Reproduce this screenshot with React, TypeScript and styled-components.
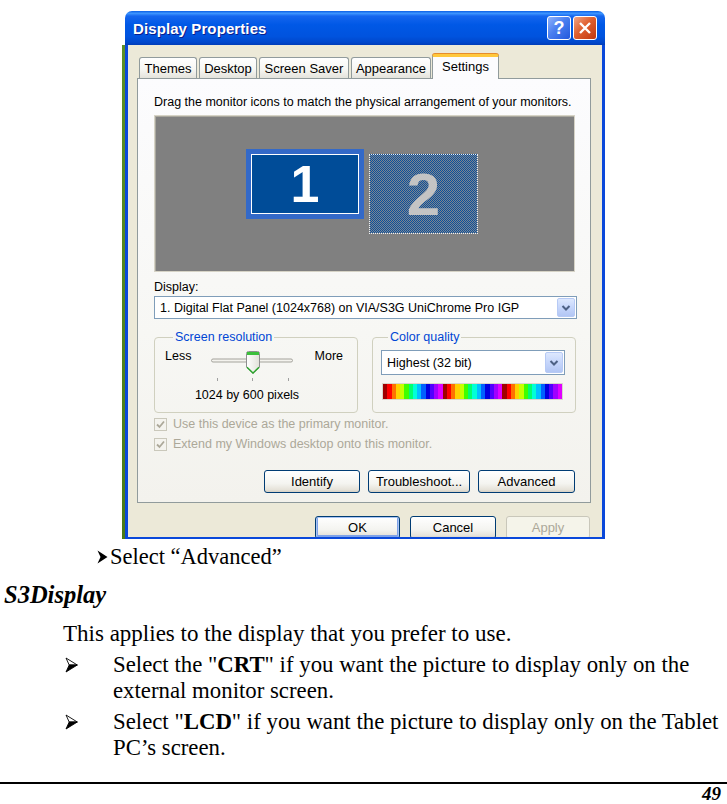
import React from "react";
import styled, { createGlobalStyle } from "styled-components";

const Global = createGlobalStyle`
  html, body { margin: 0; padding: 0; background: #fff; }
  body { width: 727px; min-height: 804px; }
`;

const Page = styled.div`
  display: flex;
  flex-direction: column;
  width: 727px;
  font-family: "Liberation Serif", "Times New Roman", serif;
  color: #000;
`;

/* ---------- screenshot of the dialog ---------- */

const Shot = styled.div`
  margin: 11px 0 0 122px;
  width: 483px;
  height: 528px;
  box-sizing: border-box;
  padding-left: 3px;
  display: flex;
  background: linear-gradient(to bottom, transparent 0 34px, #5c8f25 34px, #4a7a18 100%) left top / 3px 100% no-repeat;
`;

const Window = styled.div`
  flex: 1;
  display: flex;
  flex-direction: column;
  font-family: "Liberation Sans", Arial, sans-serif;
  font-size: 12.5px;
  color: #000;
`;

const TitleBar = styled.div`
  height: 34px;
  flex: none;
  display: flex;
  align-items: center;
  gap: 2px;
  padding: 0 8px 0 8px;
  border-radius: 7px 7px 0 0;
  background: linear-gradient(
    180deg,
    #0a5fe6 0%,
    #3d95ff 7%,
    #1566ee 15%,
    #0058e6 40%,
    #0053de 75%,
    #0047cc 92%,
    #003cb8 100%
  );
`;

const Title = styled.div`
  flex: 1;
  color: #fff;
  font-weight: bold;
  font-size: 15px;
  letter-spacing: 0.1px;
  text-shadow: 1px 1px 0 #0a1e8c;
`;

const CaptionBtn = styled.div<{ $kind: "help" | "close" }>`
  width: 24px;
  height: 24px;
  box-sizing: border-box;
  border: 1px solid #fff;
  border-radius: 3px;
  display: flex;
  align-items: center;
  justify-content: center;
  color: #fff;
  font-weight: bold;
  font-size: 18px;
  background: ${(p) =>
    p.$kind === "help"
      ? "linear-gradient(135deg, #8fb3fb 0%, #4a7ff0 45%, #2258dc 100%)"
      : "linear-gradient(135deg, #f0a587 0%, #e0602f 45%, #c0370f 100%)"};
`;

const Frame = styled.div`
  flex: 1;
  display: flex;
  flex-direction: column;
  background: #ece9d8;
  border: 3px solid #0a48da;
  border-top: 0;
  border-bottom-width: 2px;
  padding: 9px 11px 0 9px;
  overflow: hidden;
  min-height: 0;
`;

const TabRow = styled.div`
  display: flex;
  align-items: flex-end;
  gap: 2px;
  height: 25px;
  padding-left: 2px;
  margin-bottom: -1px;
  position: relative;
  z-index: 1;
  flex: none;
`;

const Tab = styled.div<{ $w: number; $active?: boolean }>`
  width: ${(p) => p.$w}px;
  box-sizing: border-box;
  height: ${(p) => (p.$active ? 25 : 21)}px;
  margin-bottom: ${(p) => (p.$active ? 0 : 1)}px;
  margin-left: ${(p) => (p.$active ? -1 : 0)}px;
  border: 1px solid #919b9c;
  border-bottom: none;
  border-top: ${(p) => (p.$active ? "3px solid #ffc83c" : "1px solid #919b9c")};
  border-radius: 3px 3px 0 0;
  display: flex;
  justify-content: center;
  align-items: ${(p) => (p.$active ? "flex-start" : "center")};
  padding-top: ${(p) => (p.$active ? 2 : 0)}px;
  font-size: 13px;
  background: ${(p) =>
    p.$active
      ? "#fcfcfe"
      : "linear-gradient(180deg, #ffffff 0%, #f7f7f3 55%, #e4e3dc 100%)"};
  box-shadow: ${(p) => (p.$active ? "0 -1px 0 #e68b2c" : "none")};
`;

const Panel = styled.div`
  flex: none;
  display: flex;
  flex-direction: column;
  border: 1px solid #919b9c;
  background: linear-gradient(180deg, #fcfcfe 0%, #f7f7f4 60%, #f3f2ed 100%);
  padding: 16px 13px 9px 16px;
`;

const Line = styled.div<{ $mt?: number; $color?: string }>`
  line-height: 14px;
  height: 14px;
  margin-top: ${(p) => p.$mt ?? 0}px;
  color: ${(p) => p.$color ?? "#000"};
  white-space: nowrap;
`;

const MonitorArea = styled.div`
  margin-top: 6px;
  margin-right: 2px;
  height: 157px;
  box-sizing: border-box;
  position: relative;
  background: #808080;
  border: 1px solid #d6d3c6;
  box-shadow: inset 1px 1px 0 #a9a79d;
`;

const Monitor = styled.div<{ $x: number; $y: number; $w: number; $h: number; $primary?: boolean }>`
  position: absolute;
  left: ${(p) => p.$x}px;
  top: ${(p) => p.$y}px;
  width: ${(p) => p.$w}px;
  height: ${(p) => p.$h}px;
  box-sizing: border-box;
  display: flex;
  align-items: center;
  justify-content: center;
  font-family: "Liberation Sans", Arial, sans-serif;
  font-weight: bold;
  ${(p) =>
    p.$primary
      ? `
    border: 5px solid #3369c8;
    box-shadow: inset 0 0 0 1px #ffffff;
    background: #004c98;
    color: #fff;
    font-size: 52px;
  `
      : `
    border: 1px dotted #f0f0f0;
    background: repeating-conic-gradient(#0b4f9c 0 25%, #7d8690 0 50%) 0 0 / 2px 2px;
    color: #c4c4c4;
    font-size: 60px;
  `}
`;

const Select = styled.div<{ $h: number }>`
  height: ${(p) => p.$h}px;
  box-sizing: border-box;
  border: 1px solid #7f9db9;
  background: #fff;
  display: flex;
  align-items: center;
  padding: 0 1px 0 5px;
`;

const SelectText = styled.div`
  flex: 1;
  white-space: nowrap;
  overflow: hidden;
`;

const SelectArrow = styled.div`
  width: 18px;
  height: calc(100% - 2px);
  box-sizing: border-box;
  border: 1px solid #b7caf5;
  border-radius: 2px;
  background: linear-gradient(180deg, #dde8fe 0%, #c6d6fb 50%, #b2c6f4 100%);
  display: flex;
  align-items: center;
  justify-content: center;
`;

const GroupRow = styled.div`
  margin-top: 11px;
  display: grid;
  grid-template-columns: 204px 204px;
  gap: 14px;
  height: 83px;
`;

const Group = styled.fieldset<{ $pl: number; $pr: number }>`
  margin: 0;
  min-width: 0;
  border: 1px solid #d0d0bf;
  border-radius: 4px;
  padding: 0 ${(p) => p.$pr}px 0 ${(p) => p.$pl}px;
  display: flex;
  flex-direction: column;
`;

const Legend = styled.legend<{ $ml: number }>`
  color: #0046d5;
  padding: 0 2px;
  margin-left: ${(p) => p.$ml}px;
  line-height: 14px;
  font-size: 12.5px;
`;

const SliderRow = styled.div`
  margin-top: 5px;
  display: grid;
  grid-template-columns: 46px 82px 1fr;
  align-items: start;
`;

const SliderLabel = styled.div<{ $right?: boolean }>`
  line-height: 14px;
  justify-self: ${(p) => (p.$right ? "end" : "start")};
`;

const SliderSvg = styled.svg`
  display: block;
  margin-top: 2px;
`;

const Caption = styled.div`
  margin-top: 6px;
  line-height: 14px;
  width: 164px;
  text-align: center;
`;

const ColorBar = styled.div<{ $bg: string }>`
  margin: 8px 2px 0 1px;
  height: 17px;
  box-sizing: border-box;
  border: 1px solid #d8d6cc;
  background: ${(p) => p.$bg};
`;

const CheckRow = styled.div<{ $mt?: number }>`
  height: 20px;
  margin-top: ${(p) => p.$mt ?? 0}px;
  display: flex;
  align-items: center;
  gap: 6px;
  color: #aca899;
`;

const CheckBox = styled.div`
  width: 13px;
  height: 13px;
  box-sizing: border-box;
  border: 1px solid #cac8bb;
  background: #f4f3ee;
  display: flex;
  align-items: center;
  justify-content: center;
`;

const ButtonRow = styled.div<{ $mt: number; $pr: number; $gap: number }>`
  margin-top: ${(p) => p.$mt}px;
  padding-right: ${(p) => p.$pr}px;
  display: flex;
  justify-content: flex-end;
  gap: ${(p) => p.$gap}px;
  flex: none;
`;

const XPButton = styled.div<{ $w: number; $disabled?: boolean; $default?: boolean }>`
  width: ${(p) => p.$w}px;
  height: 23px;
  flex: none;
  box-sizing: border-box;
  border: 1px solid ${(p) => (p.$disabled ? "#c9c7ba" : "#003c74")};
  border-radius: 3px;
  display: flex;
  align-items: center;
  justify-content: center;
  font-size: 13px;
  color: ${(p) => (p.$disabled ? "#aca899" : "#000")};
  background: ${(p) =>
    p.$disabled
      ? "#f5f4ea"
      : "linear-gradient(180deg, #ffffff 0%, #f4f4f0 60%, #e6e3da 88%, #d6d0c5 100%)"};
  box-shadow: ${(p) =>
    p.$default ? "inset 0 0 0 1px #a9c4f3, inset 0 -1px 0 2px #7ea2e8" : "none"};
`;

/* ---------- document text ---------- */

const AdvLine = styled.div`
  margin-top: 5px;
  display: grid;
  grid-template-columns: 13px 1fr;
  align-items: center;
  padding-left: 97px;
  font-size: 22.5px;
  line-height: 26px;
  height: 26px;
`;

const Marker = styled.svg`
  display: block;
`;

const Heading = styled.div`
  margin: 12px 0 0 4px;
  font-weight: bold;
  font-style: italic;
  font-size: 24.5px;
  line-height: 26px;
`;

const Para = styled.div`
  margin: 13px 0 0 63px;
  font-size: 23px;
  line-height: 26px;
`;

const BulletItem = styled.div`
  margin-top: 5px;
  display: grid;
  grid-template-columns: 48px 1fr;
  padding-left: 65px;
  font-size: 22.8px;
  line-height: 26px;
  white-space: nowrap;
`;

const MarkerCell = styled.div`
  height: 26px;
  display: flex;
  align-items: center;
`;

const Rule = styled.div`
  margin-top: 21px;
  height: 2px;
  background: #000;
`;

const PageNum = styled.div`
  margin-top: 2px;
  text-align: right;
  padding-right: 6px;
  font-weight: bold;
  font-style: italic;
  font-size: 19px;
  line-height: 15px;
  height: 15px;
`;

/* ---------- data ---------- */

const hueCycle = [
  "#a00000",
  "#ff0000",
  "#ff7000",
  "#ffd000",
  "#c8ff00",
  "#40ff00",
  "#00ff70",
  "#00ffd8",
  "#00c0ff",
  "#0060ff",
  "#0000e0",
  "#5000ff",
  "#a000ff",
  "#e000ff",
];

const colorBarBg = (() => {
  const colors = [...hueCycle, ...hueCycle, ...hueCycle];
  const step = 100 / colors.length;
  const stops = colors.map(
    (c, i) => `${c} ${(i * step).toFixed(2)}% ${((i + 1) * step).toFixed(2)}%`
  );
  return `linear-gradient(90deg, ${stops.join(", ")})`;
})();

const tabs = [
  { label: "Themes", w: 58 },
  { label: "Desktop", w: 58 },
  { label: "Screen Saver", w: 90 },
  { label: "Appearance", w: 80 },
  { label: "Settings", w: 67, active: true },
];

const Chevron = () => (
  <svg width="10" height="8" viewBox="0 0 10 8">
    <path d="M1.5 2 L5 5.5 L8.5 2" fill="none" stroke="#4d6185" strokeWidth="2" />
  </svg>
);

const Check = () => (
  <svg width="9" height="9" viewBox="0 0 9 9">
    <path d="M1 4.5 L3.5 7 L8 1.5" fill="none" stroke="#aca899" strokeWidth="1.8" />
  </svg>
);

const SolidArrow = () => (
  <Marker width="11" height="14" viewBox="0 0 11 14">
    <path d="M0.5 0.5 L10.5 7 L0.5 13.5 L3.5 7 Z" fill="#000" />
  </Marker>
);

const OutlineArrow = () => (
  <Marker width="13" height="16" viewBox="0 0 13 16">
    <path d="M1 1 L12.3 8 L4.2 8 Z" fill="#fff" stroke="#000" strokeWidth="0.9" strokeLinejoin="round" />
    <path d="M4.2 8 L12.3 8 L1 15 Z" fill="#000" stroke="#000" strokeWidth="0.9" strokeLinejoin="round" />
  </Marker>
);

const Slider = () => (
  <SliderSvg width="82" height="31" viewBox="0 0 82 31">
    <defs>
      <linearGradient id="thumbFill" x1="0" y1="0" x2="1" y2="0">
        <stop offset="0" stopColor="#ffffff" />
        <stop offset="1" stopColor="#e2e1da" />
      </linearGradient>
    </defs>
    <rect x="0.5" y="8" width="81" height="3" rx="1.5" fill="#f4f3ee" stroke="#a4a39c" strokeWidth="1" />
    <path
      d="M35.5 2.5 Q35.5 0.5 37.5 0.5 H46.5 Q48.5 0.5 48.5 2.5 V16 L42 22.5 L35.5 16 Z"
      fill="url(#thumbFill)"
      stroke="#8e8f8f"
    />
    <rect x="36" y="1" width="12" height="3" fill="#3cc03c" />
    <path d="M36 16.3 L42 22 L48 16.3" fill="none" stroke="#2aa52a" strokeWidth="1.4" />
    <line x1="6.5" y1="27" x2="6.5" y2="30" stroke="#a0a0a0" />
    <line x1="41.5" y1="27" x2="41.5" y2="30" stroke="#a0a0a0" />
    <line x1="77.5" y1="27" x2="77.5" y2="30" stroke="#a0a0a0" />
  </SliderSvg>
);

export default function App() {
  return (
    <Page>
      <Global />
      <Shot>
        <Window>
          <TitleBar>
            <Title>Display Properties</Title>
            <CaptionBtn $kind="help">?</CaptionBtn>
            <CaptionBtn $kind="close">
              <svg width="14" height="14" viewBox="0 0 14 14">
                <path d="M2 2 L12 12 M12 2 L2 12" stroke="#fff" strokeWidth="2.4" />
              </svg>
            </CaptionBtn>
          </TitleBar>
          <Frame>
            <TabRow>
              {tabs.map((t) => (
                <Tab key={t.label} $w={t.w} $active={t.active}>
                  {t.label}
                </Tab>
              ))}
            </TabRow>
            <Panel>
              <Line>Drag the monitor icons to match the physical arrangement of your monitors.</Line>
              <MonitorArea>
                <Monitor $primary $x={91} $y={33} $w={118} $h={70}>
                  1
                </Monitor>
                <Monitor $x={214} $y={38} $w={109} $h={80}>
                  2
                </Monitor>
              </MonitorArea>
              <Line $mt={8}>Display:</Line>
              <Select $h={23} style={{ marginTop: 2 }}>
                <SelectText>1. Digital Flat Panel (1024x768) on VIA/S3G UniChrome Pro IGP</SelectText>
                <SelectArrow>
                  <Chevron />
                </SelectArrow>
              </Select>
              <GroupRow>
                <Group $pl={10} $pr={14}>
                  <Legend $ml={8}>Screen resolution</Legend>
                  <SliderRow>
                    <SliderLabel>Less</SliderLabel>
                    <Slider />
                    <SliderLabel $right>More</SliderLabel>
                  </SliderRow>
                  <Caption>1024 by 600 pixels</Caption>
                </Group>
                <Group $pl={8} $pr={10}>
                  <Legend $ml={7}>Color quality</Legend>
                  <Select $h={25} style={{ marginTop: 6 }}>
                    <SelectText>Highest (32 bit)</SelectText>
                    <SelectArrow>
                      <Chevron />
                    </SelectArrow>
                  </Select>
                  <ColorBar $bg={colorBarBg} />
                </Group>
              </GroupRow>
              <CheckRow $mt={1}>
                <CheckBox>
                  <Check />
                </CheckBox>
                Use this device as the primary monitor.
              </CheckRow>
              <CheckRow>
                <CheckBox>
                  <Check />
                </CheckBox>
                Extend my Windows desktop onto this monitor.
              </CheckRow>
              <ButtonRow $mt={16} $pr={2} $gap={8}>
                <XPButton $w={96}>Identify</XPButton>
                <XPButton $w={102}>Troubleshoot...</XPButton>
                <XPButton $w={97}>Advanced</XPButton>
              </ButtonRow>
            </Panel>
            <ButtonRow $mt={13} $pr={1} $gap={10}>
              <XPButton $w={85} $default>
                OK
              </XPButton>
              <XPButton $w={86}>Cancel</XPButton>
              <XPButton $w={84} $disabled>
                Apply
              </XPButton>
            </ButtonRow>
          </Frame>
        </Window>
      </Shot>

      <AdvLine>
        <SolidArrow />
        <span>Select “Advanced”</span>
      </AdvLine>
      <Heading>S3Display</Heading>
      <Para>This applies to the display that you prefer to use.</Para>
      <BulletItem>
        <MarkerCell>
          <OutlineArrow />
        </MarkerCell>
        <span>
          Select the "<b>CRT</b>" if you want the picture to display only on the
          <br />
          external monitor screen.
        </span>
      </BulletItem>
      <BulletItem>
        <MarkerCell>
          <OutlineArrow />
        </MarkerCell>
        <span>
          Select "<b>LCD</b>" if you want the picture to display only on the Tablet
          <br />
          PC’s screen.
        </span>
      </BulletItem>
      <Rule />
      <PageNum>49</PageNum>
    </Page>
  );
}
